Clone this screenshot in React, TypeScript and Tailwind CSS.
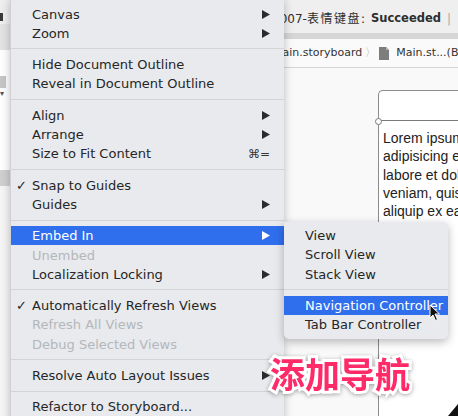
import React from "react";

type Item =
  | { sep: true }
  | { label: string; arrow?: boolean; check?: boolean; disabled?: boolean; active?: boolean; shortcut?: string };

const mainItems: Item[] = [
  { label: "Canvas", arrow: true },
  { label: "Zoom", arrow: true },
  { sep: true },
  { label: "Hide Document Outline" },
  { label: "Reveal in Document Outline" },
  { sep: true },
  { label: "Align", arrow: true },
  { label: "Arrange", arrow: true },
  { label: "Size to Fit Content", shortcut: "⌘=" },
  { sep: true },
  { label: "Snap to Guides", check: true },
  { label: "Guides", arrow: true },
  { sep: true },
  { label: "Embed In", arrow: true, active: true },
  { label: "Unembed", disabled: true },
  { label: "Localization Locking", arrow: true },
  { sep: true },
  { label: "Automatically Refresh Views", check: true },
  { label: "Refresh All Views", disabled: true },
  { label: "Debug Selected Views", disabled: true },
  { sep: true },
  { label: "Resolve Auto Layout Issues", arrow: true },
  { sep: true },
  { label: "Refactor to Storyboard..." },
];

const subItems: Item[] = [
  { label: "View" },
  { label: "Scroll View" },
  { label: "Stack View" },
  { sep: true },
  { label: "Navigation Controller", active: true },
  { label: "Tab Bar Controller" },
];

function Arrow({ white }: { white?: boolean }) {
  return (
    <svg width="8" height="9" viewBox="0 0 8 9" className="shrink-0">
      <polygon points="0,0 8,4.5 0,9" fill={white ? "#ffffff" : "#2b2b2b"} />
    </svg>
  );
}

function MenuRows({ items }: { items: Item[] }) {
  return (
    <>
      {items.map((it, i) => {
        if ("sep" in it) {
          return (
            <div key={i} className="h-[12px] flex items-center">
              <div className="h-px w-full bg-[#d2d4d7]" />
            </div>
          );
        }
        const color = it.active ? "text-white" : it.disabled ? "text-[#b4b7bb]" : "text-[#262626]";
        return (
          <div
            key={i}
            className={`h-[19.3px] flex items-center pr-[14px] ${it.active ? "bg-[#2f6fee]" : ""} ${color}`}
          >
            <div className="w-[21px] shrink-0 pl-[5px] text-[13px] leading-none">{it.check ? "✓" : ""}</div>
            <div className="flex-1 whitespace-nowrap text-[13px] leading-none">{it.label}</div>
            {it.arrow && <Arrow white={it.active} />}
            {it.shortcut && <div className="text-[12px] leading-none text-[#333]">{it.shortcut}</div>}
          </div>
        );
      })}
    </>
  );
}

export default function App() {
  return (
    <div className="relative w-[458px] h-[416px] overflow-hidden bg-white font-['DejaVu_Sans',sans-serif]">
      {/* background window */}
      <div className="flex h-full w-full">
        <div className="w-[10px] flex flex-col shrink-0">
          <div className="h-[10px] bg-[#efefef]" />
          <div className="h-[14px] bg-[#efefef] flex items-center">
            <div className="w-[3px] h-[8px] bg-[#3a3a3a]" />
          </div>
          <div className="h-[26px] bg-[#e3e3e3]" />
          <div className="h-[24px] bg-white" />
          <div className="h-[16px] bg-white flex items-center">
            <div className="w-[6px] h-[12px] bg-[#c6c6c6]" />
          </div>
          <div className="h-[12px] bg-white text-[8px] leading-none text-[#555]">▾</div>
          <div className="h-[68px] bg-white" />
          <div className="h-[16px] bg-[#d0d0d0]" />
          <div className="flex-1 bg-[#f6f6f6]" />
        </div>
        <div className="flex-1 flex flex-col min-w-0">
          <div className="h-[33px] bg-[#efefef] flex items-center justify-end pr-[7px] pt-[5px] text-[12px] text-[#2e2e2e] whitespace-nowrap font-['DejaVu_Sans','Noto_Sans_CJK_SC',sans-serif]">
            <span>Build 007-</span>
            <span className="tracking-[1.5px]">表情键盘</span>
            <span>:</span>
            <span className="font-bold ml-[6px] text-[11.5px]">Succeeded</span>
            <span className="ml-[6px] text-[#aaa]">|</span>
          </div>
          <div className="h-[6px] bg-[#d6d6d6]" />
          <div className="h-[29px] bg-[#fafafa] border-b border-[#d4d4d4] flex items-center pl-[263px] text-[11px] text-[#333] whitespace-nowrap overflow-hidden font-['DejaVu_Sans',sans-serif]">
            <span>Main.storyboard</span>
            <span className="mx-[3px] text-[#b0b0b0]">〉</span>
            <svg width="10" height="13" viewBox="0 0 10 13" className="shrink-0 mr-[7px]">
              <path d="M0 0 H7 L10 3 V13 H0 Z" fill="#7d7d7d" />
              <path d="M7 0 V3 H10" fill="#b5b5b5" />
            </svg>
            <span>Main.st...(Base)</span>
          </div>
          <div className="flex-1 bg-[#f9f9f9] pl-[368px] pt-[22px] overflow-hidden">
            <div className="relative w-[140px] h-[400px] bg-white border-l-[1.5px] border-t-[1.5px] border-[#8c8c8c] rounded-tl-[5px]">
              <div className="h-[30px] border-b-[1.5px] border-[#7a7a7a]" />
              <div className="absolute left-[-4.5px] top-[26.5px] w-[7px] h-[7px] rounded-full bg-white border border-[#7a7a7a]" />
              <div className="pl-[4px] pt-[8px] text-[14px] leading-[18.3px] text-[#222] whitespace-nowrap font-['Liberation_Sans',sans-serif]">
                <div>Lorem ipsum dolor</div>
                <div>adipisicing elit</div>
                <div>labore et dolore</div>
                <div>veniam, quis</div>
                <div>aliquip ex ea</div>
                <div>irure dolor</div>
              </div>
            </div>
          </div>
        </div>
      </div>

      {/* main menu */}
      <div className="absolute left-[10px] top-[-2px] w-[274px] pt-[6.4px] pb-[6px] bg-[#e8eaed] border-l border-[#cfd1d4] shadow-[0_2px_10px_rgba(0,0,0,0.25)] rounded-b-[5px]">
        <MenuRows items={mainItems} />
      </div>

      {/* submenu */}
      <div className="absolute left-[284px] top-[222px] w-[164px] pt-[4px] pb-[4.5px] bg-[#e8eaed] shadow-[0_3px_10px_rgba(0,0,0,0.28)] rounded-[5px] rounded-tl-none">
        <MenuRows items={subItems} />
      </div>

      {/* cursor */}
      <svg className="absolute left-[429px] top-[304px]" width="12" height="18" viewBox="0 0 12 18">
        <path d="M1 1 L1 14 L4 11 L6.5 16.5 L8.5 15.5 L6 10 L10.5 10 Z" fill="#111" stroke="#fff" strokeWidth="1" />
      </svg>

      {/* caption */}
      <div className="absolute left-[270px] top-[355px] text-[35px] leading-none font-bold text-[#ff2b69] whitespace-nowrap font-['Noto_Sans_CJK_SC',sans-serif] [-webkit-text-stroke:6px_white] [paint-order:stroke_fill] [filter:drop-shadow(0_1px_2px_rgba(0,0,0,0.35))]">
        添加导航
      </div>

      {/* bottom-right corner mark */}
      <svg className="absolute left-[448px] top-[404px]" width="10" height="12" viewBox="0 0 10 12">
        <polygon points="10,0 10,12 0,12" fill="#111" />
      </svg>
    </div>
  );
}
